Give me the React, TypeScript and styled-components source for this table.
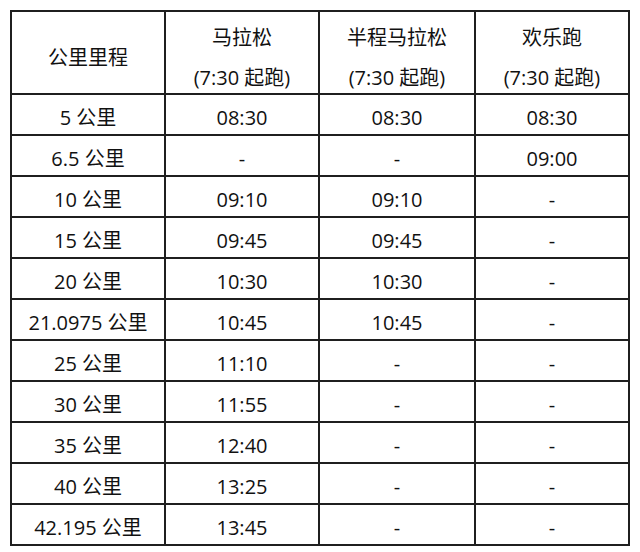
import React from 'react';
import styled, { createGlobalStyle } from 'styled-components';

const GlobalStyle = createGlobalStyle`
    html, body {
        margin: 0;
        padding: 0;
        background: #ffffff;
    }
    body {
        font-family: 'Open Sans', 'Noto Sans CJK SC', sans-serif;
        color: #111111;
    }
`;

type Row = [string, string, string, string];

const rows: Row[] = [
    ['5 公里', '08:30', '08:30', '08:30'],
    ['6.5 公里', '-', '-', '09:00'],
    ['10 公里', '09:10', '09:10', '-'],
    ['15 公里', '09:45', '09:45', '-'],
    ['20 公里', '10:30', '10:30', '-'],
    ['21.0975 公里', '10:45', '10:45', '-'],
    ['25 公里', '11:10', '-', '-'],
    ['30 公里', '11:55', '-', '-'],
    ['35 公里', '12:40', '-', '-'],
    ['40 公里', '13:25', '-', '-'],
    ['42.195 公里', '13:45', '-', '-'],
];

const races = ['马拉松', '半程马拉松', '欢乐跑'];

const App: React.FC = () => {
    return (
        <>
            <GlobalStyle />
            <Page>
                <Table>
                    <colgroup>
                        <col style={{ width: 154 }} />
                        <col style={{ width: 154 }} />
                        <col style={{ width: 156 }} />
                        <col style={{ width: 154 }} />
                    </colgroup>
                    <thead>
                        <HeadRow>
                            <HeadCell $single>公里里程</HeadCell>
                            {races.map((race) => (
                                <HeadCell key={race}>
                                    <HeadLines>
                                        <div>{race}</div>
                                        <div>(7:30 起跑)</div>
                                    </HeadLines>
                                </HeadCell>
                            ))}
                        </HeadRow>
                    </thead>
                    <tbody>
                        {rows.map((row) => (
                            <BodyRow key={row[0]}>
                                {row.map((value, i) => (
                                    <Cell key={i}>{value}</Cell>
                                ))}
                            </BodyRow>
                        ))}
                    </tbody>
                </Table>
            </Page>
        </>
    );
};

const Page = styled.div`
    padding: 10px 0 0 10px;
`;

const Table = styled.table`
    border-collapse: collapse;
    table-layout: fixed;
    width: 618px;
    font-size: 20px;
    line-height: 1;
`;

const HeadRow = styled.tr`
    height: 83px;
`;

const BodyRow = styled.tr`
    height: 41px;
`;

const Cell = styled.td`
    border: 2px solid #1f1f1f;
    text-align: center;
    vertical-align: middle;
    padding: 6px 0 0;
    font-weight: 400;
    white-space: nowrap;
`;

const HeadCell = styled(Cell).attrs({ as: 'th' })<{ $single?: boolean }>`
    font-weight: 400;
    padding: ${(p) => (p.$single ? '11px 0 0' : '6px 0 0')};
`;

const HeadLines = styled.div`
    line-height: 40px;
    margin-bottom: -5px;
`;

export default App;
